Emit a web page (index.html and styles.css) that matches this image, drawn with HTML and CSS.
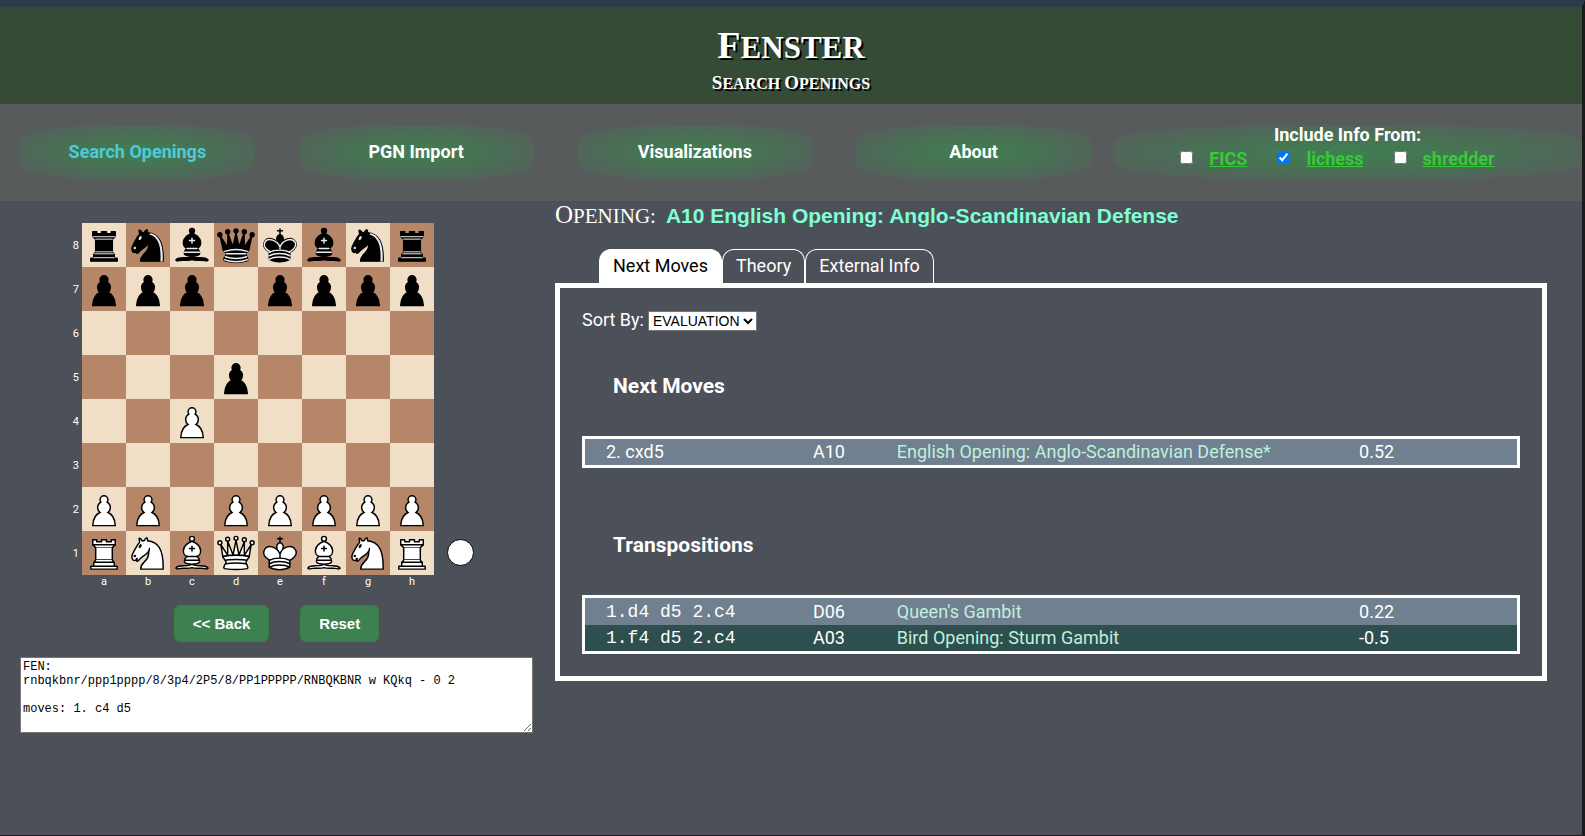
FILE: index.html
```html
<!DOCTYPE html>
<html lang="en">
<head>
<meta charset="utf-8">
<title>Fenster - Search Openings</title>
<link rel="stylesheet" href="styles.css">
</head>
<body>
<svg class="sprites" aria-hidden="true">
  <defs>
    <symbol id="wP" viewBox="0 0 45 45"><path d="M22.500 9c-2.210 0-4 1.790-4 4 0 .89.290 1.710.780 2.380C17.330 16.500 16 18.590 16 21c0 2.030.940 3.840 2.410 5.030C15.410 27.090 11 31.580 11 39.500h23c0-7.920-4.410-12.410-7.410-13.470C28.060 24.840 29 23.030 29 21c0-2.410-1.330-4.500-3.280-5.620.490-.670.780-1.490.780-2.380 0-2.210-1.790-4-4-4z" fill="#fff" stroke="#000" stroke-width="1.5" stroke-linecap="round"/></symbol>
    <symbol id="bP" viewBox="0 0 45 45"><path d="M22.500 9c-2.210 0-4 1.790-4 4 0 .89.290 1.710.780 2.380C17.330 16.500 16 18.590 16 21c0 2.030.940 3.840 2.410 5.030C15.410 27.090 11 31.580 11 39.500h23c0-7.920-4.410-12.410-7.410-13.470C28.060 24.840 29 23.030 29 21c0-2.410-1.330-4.500-3.280-5.620.490-.670.780-1.490.780-2.380 0-2.210-1.790-4-4-4z" stroke="#000" stroke-width="1.5" stroke-linecap="round"/></symbol>
    <symbol id="wR" viewBox="0 0 45 45"><g fill="#fff" stroke="#000" stroke-width="1.5" stroke-linecap="round" stroke-linejoin="round"><path stroke-linecap="butt" d="M9 39h27v-3H9v3zM12 36v-4h21v4H12zM11 14V9h4v2h5V9h5v2h5V9h4v5"/><path d="M34 14l-3 3H14l-3-3"/><path stroke-linecap="butt" stroke-linejoin="miter" d="M31 17v12.500H14V17"/><path d="M31 29.500l1.500 2.500h-20l1.500-2.500"/><path fill="none" stroke-linejoin="miter" d="M11 14h23"/></g></symbol>
    <symbol id="bR" viewBox="0 0 45 45"><g stroke="#000" stroke-width="1.5" stroke-linejoin="round"><path d="M9 39h27v-3H9v3zM12.500 32l1.500-2.500h17l1.500 2.500h-20zM12 36v-4h21v4H12z"/><path stroke-linejoin="miter" d="M14 29.500v-13h17v13H14z"/><path d="M14 16.500L11 14h23l-3 2.500H14zM11 14V9h4v2h5V9h5v2h5V9h4v5H11z"/><path fill="none" stroke="#ececec" stroke-width="1" stroke-linecap="round" d="M12 35.500h21M13 31.500h19M14 29.500h17M14 16.500h17M11 14h23"/></g></symbol>
    <symbol id="wN" viewBox="0 0 45 45"><g stroke="#000" stroke-width="1.5" stroke-linecap="round" stroke-linejoin="round"><path fill="#fff" d="M22 10c10.500 1 16.500 8 16 29H15c0-9 10-6.500 8-21"/><path fill="#fff" d="M24 18c.380 2.910-5.550 7.370-8 9-3 2-2.820 4.340-5 4-1.042-.940 1.410-3.040 0-3-1 0 .190 1.230-1 2-1 0-4.003 1-4-4 0-2 6-12 6-12s1.890-1.900 2-3.500c-.730-.994-.500-2-.500-3 1-1 3 2.500 3 2.500h2s.780-1.992 2.500-3c1 0 1 3 1 3"/><path d="M9.500 25.500a.5.5 0 1 1-1 0 .5.5 0 1 1 1 0z"/><path d="M14.933 15.750a.5 1.500 30 1 1-.866-.500.5 1.500 30 1 1 .866.500z"/></g></symbol>
    <symbol id="bN" viewBox="0 0 45 45"><g stroke="#000" stroke-width="1.5" stroke-linecap="round" stroke-linejoin="round"><path d="M22 10c10.500 1 16.500 8 16 29H15c0-9 10-6.500 8-21"/><path d="M24 18c.380 2.910-5.550 7.370-8 9-3 2-2.820 4.340-5 4-1.042-.940 1.410-3.040 0-3-1 0 .190 1.230-1 2-1 0-4.003 1-4-4 0-2 6-12 6-12s1.890-1.900 2-3.500c-.730-.994-.500-2-.500-3 1-1 3 2.500 3 2.500h2s.780-1.992 2.500-3c1 0 1 3 1 3"/><path fill="#ececec" stroke="#ececec" d="M9.500 25.500a.5.5 0 1 1-1 0 .5.5 0 1 1 1 0z"/><path fill="#ececec" stroke="#ececec" d="M14.933 15.750a.5 1.500 30 1 1-.866-.500.5 1.500 30 1 1 .866.500z"/><path fill="#ececec" stroke="none" d="M24.550 10.400l-.450 1.450.500.150c3.150 1 5.650 2.490 7.900 6.750S35.750 29.060 35.250 39l-.050.500h2.250l.050-.500c.500-10.060-.880-16.850-3.250-21.340-2.370-4.490-5.790-6.640-9.190-7.160l-.510-.100z"/></g></symbol>
    <symbol id="wB" viewBox="0 0 45 45"><g fill="none" stroke="#000" stroke-width="1.5" stroke-linecap="round" stroke-linejoin="round"><g fill="#fff" stroke-linecap="butt"><path d="M9 36c3.390-.970 10.110.430 13.500-2 3.390 2.430 10.110 1.030 13.500 2 0 0 1.650.540 3 2-.680.970-1.650.990-3 .500-3.390-.970-10.110.460-13.500-1-3.390 1.460-10.110.030-13.500 1-1.354.490-2.323.470-3-.500 1.354-1.940 3-2 3-2z"/><path d="M15 32c2.500 2.500 12.500 2.500 15 0 .500-1.500 0-2 0-2 0-2.500-2.500-4-2.500-4 5.500-1.500 6-11.500-5-15.500-11 4-10.500 14-5 15.500 0 0-2.500 1.500-2.500 4 0 0-.500.500 0 2z"/><path d="M25 8a2.500 2.500 0 1 1-5 0 2.500 2.500 0 1 1 5 0z"/></g><path stroke-linejoin="miter" d="M17.500 26h10M15 30h15m-7.500-14.500v5M20 18h5"/></g></symbol>
    <symbol id="bB" viewBox="0 0 45 45"><g fill="none" stroke="#000" stroke-width="1.5" stroke-linecap="round" stroke-linejoin="round"><g fill="#000" stroke-linecap="butt"><path d="M9 36c3.390-.970 10.110.430 13.500-2 3.390 2.430 10.110 1.030 13.500 2 0 0 1.650.540 3 2-.680.970-1.650.990-3 .500-3.390-.970-10.110.460-13.500-1-3.390 1.460-10.110.030-13.500 1-1.354.490-2.323.470-3-.500 1.354-1.940 3-2 3-2z"/><path d="M15 32c2.500 2.500 12.500 2.500 15 0 .500-1.500 0-2 0-2 0-2.500-2.500-4-2.500-4 5.500-1.500 6-11.500-5-15.500-11 4-10.500 14-5 15.500 0 0-2.500 1.500-2.500 4 0 0-.500.500 0 2z"/><path d="M25 8a2.500 2.500 0 1 1-5 0 2.500 2.500 0 1 1 5 0z"/></g><path stroke="#ececec" stroke-linejoin="miter" d="M17.500 26h10M15 30h15m-7.500-14.500v5M20 18h5"/></g></symbol>
    <symbol id="wQ" viewBox="0 0 45 45"><g fill="#fff" stroke="#000" stroke-width="1.5" stroke-linecap="round" stroke-linejoin="round"><path d="M8 12a2 2 0 1 1-4 0 2 2 0 1 1 4 0zM24.500 7.500a2 2 0 1 1-4 0 2 2 0 1 1 4 0zM41 12a2 2 0 1 1-4 0 2 2 0 1 1 4 0zM16 8.500a2 2 0 1 1-4 0 2 2 0 1 1 4 0zM33 9a2 2 0 1 1-4 0 2 2 0 1 1 4 0z"/><path stroke-linecap="butt" d="M9 26c8.500-1.500 21-1.500 27 0l2-12-7 11V11l-5.500 13.500-3-15-3 15-5.500-14V25L7 14l2 12z"/><path stroke-linecap="butt" d="M9 26c0 2 1.500 2 2.500 4 1 1.500 1 1 .500 3.500-1.500 1-1.500 2.500-1.500 2.500-1.500 1.500.500 2.500.500 2.500 6.500 1 16.500 1 23 0 0 0 1.500-1 0-2.500 0 0 .500-1.500-1-2.500-.500-2.500-.500-2 .500-3.500 1-2 2.500-2 2.500-4-8.500-1.500-18.500-1.500-27 0z"/><path fill="none" d="M11.500 30c3.500-1 18.500-1 22 0M12 33.500c6-1 15-1 21 0"/></g></symbol>
    <symbol id="bQ" viewBox="0 0 45 45"><g stroke="#000" stroke-width="1.5" stroke-linecap="round" stroke-linejoin="round"><g stroke="none"><circle cx="6" cy="12" r="2.750"/><circle cx="14" cy="9" r="2.750"/><circle cx="22.500" cy="8" r="2.750"/><circle cx="31" cy="9" r="2.750"/><circle cx="39" cy="12" r="2.750"/></g><path stroke-linecap="butt" d="M9 26c8.500-1.500 21-1.500 27 0l2.500-12.500L31 25l-.300-14.100-5.200 13.600-3-14.500-3 14.500-5.200-13.600L14 25 6.500 13.500 9 26z"/><path stroke-linecap="butt" d="M9 26c0 2 1.500 2 2.500 4 1 1.500 1 1 .500 3.500-1.500 1-1.500 2.500-1.500 2.500-1.500 1.500.500 2.500.500 2.500 6.500 1 16.500 1 23 0 0 0 1.500-1 0-2.500 0 0 .500-1.500-1-2.500-.500-2.500-.500-2 .500-3.500 1-2 2.500-2 2.500-4-8.500-1.500-18.500-1.500-27 0z"/><path fill="none" stroke-linecap="butt" d="M11 38.500a35 35 1 0 0 23 0"/><path fill="none" stroke="#ececec" d="M11 29a35 35 1 0 1 23 0M12.500 31.500h20M11.500 34.500a35 35 1 0 0 22 0M10.500 37.500a35 35 1 0 0 24 0"/></g></symbol>
    <symbol id="wK" viewBox="0 0 45 45"><g fill="none" stroke="#000" stroke-width="1.5" stroke-linecap="round" stroke-linejoin="round"><path stroke-linejoin="miter" d="M22.500 11.630V6M20 8h5"/><path fill="#fff" stroke-linecap="butt" stroke-linejoin="miter" d="M22.500 25s4.500-7.500 3-10.500c0 0-1-2.500-3-2.500s-3 2.500-3 2.500c-1.500 3 3 10.500 3 10.500"/><path fill="#fff" d="M11.500 37c5.500 3.500 15.500 3.500 21 0v-7s9-4.500 6-10.500c-4-6.500-13.500-3.500-16 4V27v-3.500c-3.500-7.500-13-10.500-16-4-3 6 5 10 5 10V37z"/><path d="M11.500 30c5.500-3 15.500-3 21 0m-21 3.500c5.500-3 15.500-3 21 0m-21 3.500c5.500-3 15.500-3 21 0"/></g></symbol>
    <symbol id="bK" viewBox="0 0 45 45"><g fill="none" stroke="#000" stroke-width="1.5" stroke-linecap="round" stroke-linejoin="round"><path stroke-linejoin="miter" d="M22.500 11.630V6"/><path fill="#000" stroke-linecap="butt" stroke-linejoin="miter" d="M22.500 25s4.500-7.500 3-10.500c0 0-1-2.500-3-2.500s-3 2.500-3 2.500c-1.500 3 3 10.500 3 10.500"/><path fill="#000" d="M11.500 37c5.500 3.500 15.500 3.500 21 0v-7s9-4.500 6-10.500c-4-6.500-13.500-3.500-16 4V27v-3.500c-3.500-7.500-13-10.500-16-4-3 6 5 10 5 10V37z"/><path stroke-linejoin="miter" d="M20 8h5"/><path stroke="#ececec" d="M32 29.500s8.500-4 6.030-9.650C34.150 14 25 18 22.500 24.500v2.100-2.100C20 18 9.906 14 6.997 19.850c-2.497 5.650 4.853 9 4.853 9M11.500 30c5.500-3 15.500-3 21 0m-21 3.500c5.500-3 15.500-3 21 0m-21 3.500c5.500-3 15.500-3 21 0"/></g></symbol>
  </defs>
</svg>

<header class="banner">
  <h1 class="engraved site-title">Fenster</h1>
  <p class="page-title"><span class="engraved">Search</span> <span class="engraved">Openings</span></p>
</header>

<nav class="navbar">
  <div class="nav-links">
    <a class="pill active" href="#search">Search Openings</a>
    <a class="pill" href="#import">PGN Import</a>
    <a class="pill" href="#visualizations">Visualizations</a>
    <a class="pill" href="#about">About</a>
  </div>
  <div class="pill sources">
    <div class="source-title">Include Info From:</div>
    <div class="source-list">
      <span class="source"><input type="checkbox" aria-label="FICS"><a href="#fics">FICS</a></span>
      <span class="source"><input type="checkbox" aria-label="lichess" checked><a href="#lichess">lichess</a></span>
      <span class="source"><input type="checkbox" aria-label="shredder"><a href="#shredder">shredder</a></span>
    </div>
  </div>
</nav>

<main class="content">
  <section class="left">
    <div class="board-row">
      <div class="ranks"><span>8</span><span>7</span><span>6</span><span>5</span><span>4</span><span>3</span><span>2</span><span>1</span></div>
      <div class="board" id="board"></div>
      <div class="turn"></div>
      <div class="files"><span>a</span><span>b</span><span>c</span><span>d</span><span>e</span><span>f</span><span>g</span><span>h</span></div>
    </div>
    <div class="actions">
      <button type="button" class="btn">&lt;&lt; Back</button>
      <button type="button" class="btn">Reset</button>
    </div>
    <textarea class="fen" aria-label="FEN and moves" spellcheck="false">FEN:
rnbqkbnr/ppp1pppp/8/3p4/2P5/8/PP1PPPPP/RNBQKBNR w KQkq - 0 2

moves: 1. c4 d5</textarea>
  </section>

  <section class="right">
    <div class="opening">
      <span class="engraved opening-label">Opening:</span>
      <span class="opening-name">A10 English Opening: Anglo-Scandinavian Defense</span>
    </div>
    <div class="tabs" role="tablist">
      <button type="button" class="tab selected" role="tab" aria-selected="true">Next Moves</button>
      <button type="button" class="tab" role="tab" aria-selected="false">Theory</button>
      <button type="button" class="tab" role="tab" aria-selected="false">External Info</button>
    </div>
    <div class="panel" role="tabpanel">
      <div class="sort">
        <label for="sort">Sort By:</label>
        <select id="sort"><option>EVALUATION</option><option>ECO</option><option>NAME</option></select>
      </div>
      <h2 class="heading">Next Moves</h2>
      <table class="moves">
        <colgroup><col class="c-move"><col class="c-eco"><col class="c-name"><col></colgroup>
        <tbody>
          <tr><td>2. cxd5</td><td>A10</td><td class="name">English Opening: Anglo-Scandinavian Defense*</td><td>0.52</td></tr>
        </tbody>
      </table>
      <h2 class="heading">Transpositions</h2>
      <table class="moves">
        <colgroup><col class="c-move"><col class="c-eco"><col class="c-name"><col></colgroup>
        <tbody>
          <tr><td class="line">1.d4 d5 2.c4</td><td>D06</td><td class="name">Queen's Gambit</td><td>0.22</td></tr>
          <tr><td class="line">1.f4 d5 2.c4</td><td>A03</td><td class="name">Bird Opening: Sturm Gambit</td><td>-0.5</td></tr>
        </tbody>
      </table>
    </div>
  </section>
</main>
<script src="board.js"></script>
</body>
</html>
```
FILE: styles.css
```css
* { box-sizing: border-box; }

body {
  margin: 0;
  min-height: 100vh;
  border-top: 7px solid #2c3c4c;
  border-right: 3px solid #1b1b1c;
  border-bottom: 1px solid #1b1b1c;
  background: #4c5058;
  color: #fff;
  font-family: Roboto, sans-serif;
  font-size: 18px;
}

.sprites { display: none; }

/* Inscription-style capitals: a larger initial, then smaller capitals */
.engraved {
  display: inline-block;
  font-family: "Liberation Serif", serif;
  text-transform: uppercase;
}

.banner {
  display: flex;
  flex-direction: column;
  align-items: center;
  padding: 18px 0 7px;
  background: #364b36;
  text-shadow: 2px 2px 0 #000;
}
.site-title {
  margin: 0;
  font-size: 31px;
  line-height: 40px;
}
.site-title::first-letter { font-size: 38px; }
.page-title {
  margin: 2px 0 0;
  font-family: "Liberation Serif", serif;
  font-weight: bold;
  font-size: 16px;
  line-height: 26px;
}
.page-title .engraved::first-letter { font-size: 19px; }

.navbar {
  display: grid;
  grid-template-columns: 1071fr 469fr;
  gap: 22px;
  padding: 22px 0 22px 20px;
  background: #585b5c;
}
.nav-links {
  display: grid;
  grid-template-columns: repeat(4, 1fr);
  gap: 44px;
}
.pill {
  display: flex;
  align-items: center;
  justify-content: center;
  height: 53px;
  padding-bottom: 2px;
  border-radius: 30%;
  background: radial-gradient(#3d8150, #585b5c);
  color: #fff;
  font-weight: bold;
  text-decoration: none;
}
.pill.active { color: #4dcbdb; }
.sources {
  flex-direction: column;
  justify-content: flex-start;
  gap: 4px;
  line-height: 22px;
}
.source-title { line-height: 18px; }
.source-list { display: flex; gap: 30px; padding-right: 20px; }
.source { display: flex; gap: 16px; }
.source input {
  width: 13px;
  height: 13px;
  margin: 3px 0 0;
}
.source a { color: #32cd32; }

.content {
  display: grid;
  grid-template-columns: 513fr 992fr;
  gap: 22px;
  padding: 0 35px 0 20px;
}

.left { padding-top: 22px; }
.board-row {
  display: grid;
  grid-template-columns: 12px 352px 40px;
  padding-left: 50px;
  font-size: 11px;
}
.ranks {
  display: grid;
  grid-template-rows: repeat(8, 1fr);
  align-items: center;
  padding-right: 3px;
  text-align: right;
}
.board {
  display: grid;
  grid-template-columns: repeat(8, minmax(0, 1fr));
  grid-template-rows: repeat(8, minmax(0, 1fr));
  aspect-ratio: 1;
}
.square { background: #f0dec7; }
.square.dark { background: #b58768; }
.square svg { display: block; width: 100%; height: 100%; }
.turn {
  align-self: end;
  width: 27px;
  height: 27px;
  margin: 0 0 9px 13px;
  border: 1px solid #000;
  border-radius: 50%;
  background: #fff;
}
.files {
  grid-column: 2;
  display: grid;
  grid-template-columns: repeat(8, 1fr);
  line-height: 14px;
  text-align: center;
}

.actions {
  display: flex;
  justify-content: center;
  gap: 31px;
  margin: 16px 0 15px;
}
.btn {
  padding: 9px 18px;
  border: 1px solid #38803f;
  border-radius: 6px;
  background: #3d8150;
  color: #fff;
  font: bold 15px/17px "Liberation Sans", Arial, sans-serif;
}
.fen {
  display: block;
  width: 100%;
  height: 76px;
  padding: 2px;
  border: 1px solid #767676;
  background: #fff;
  color: #000;
  font: 12px/14px "Liberation Mono", monospace;
}

.opening {
  display: flex;
  align-items: baseline;
  gap: 10px;
  height: 28px;
  margin-bottom: 20px;
  line-height: 28px;
}
.opening-label { font-size: 21px; }
.opening-label::first-letter { font-size: 25px; }
.opening-name {
  color: #7fffd4;
  font-family: "Liberation Sans", Arial, sans-serif;
  font-size: 21px;
  font-weight: bold;
}

.tabs { display: flex; margin-left: 44px; }
.tab {
  height: 34px;
  padding: 0 13px 2px;
  border: 1px solid #fff;
  border-bottom: 0;
  border-radius: 12px 12px 0 0;
  background: transparent;
  color: #fff;
  font: 18px Roboto, sans-serif;
}
.tab.selected { background: #fff; color: #000; }

.panel { padding: 22px; border: 5px solid #fff; }
.sort {
  display: flex;
  gap: 4px;
  height: 22px;
  line-height: 20px;
}
.sort select {
  height: 20px;
  margin-top: 1px;
  padding: 0;
  border: 1px solid #767676;
  border-radius: 0;
  background: #fff;
  color: #000;
  font: 14px "Liberation Sans", Arial, sans-serif;
}
.heading {
  margin: 65px 31px 38px;
  font-size: 21px;
  line-height: 24px;
}
.sort + .heading { margin-top: 42px; }

.moves {
  width: 100%;
  border: 3px solid #fff;
  border-spacing: 0;
  table-layout: fixed;
}
.c-move { width: 22.2%; }
.c-eco { width: 9%; }
.c-name { width: 49.6%; }
.moves td { padding: 0 0 0 21px; height: 26px; line-height: 26px; }
.moves tr:not(:last-child) td { height: 27px; }
.moves tr { background: #708090; }
.moves tr:nth-child(even) { background: #2f4f4f; }
.moves .name { color: #bff0dc; }
.moves .line { font-family: "Liberation Mono", monospace; }
```
FILE: board.js
```javascript
const placement = "rnbqkbnr/ppp1pppp/8/3p4/2P5/8/PP1PPPPP/RNBQKBNR";
const board = document.getElementById("board");

placement.split("/").forEach((row, rank) => {
  const cells = row.replace(/\d/g, (n) => " ".repeat(Number(n)));
  [...cells].forEach((piece, file) => {
    const square = document.createElement("div");
    square.className = (rank + file) % 2 ? "square dark" : "square";
    if (piece !== " ") {
      const side = piece === piece.toUpperCase() ? "w" : "b";
      square.innerHTML = `<svg viewBox="0 0 45 45"><use href="#${side}${piece.toUpperCase()}"/></svg>`;
    }
    board.append(square);
  });
});
```
